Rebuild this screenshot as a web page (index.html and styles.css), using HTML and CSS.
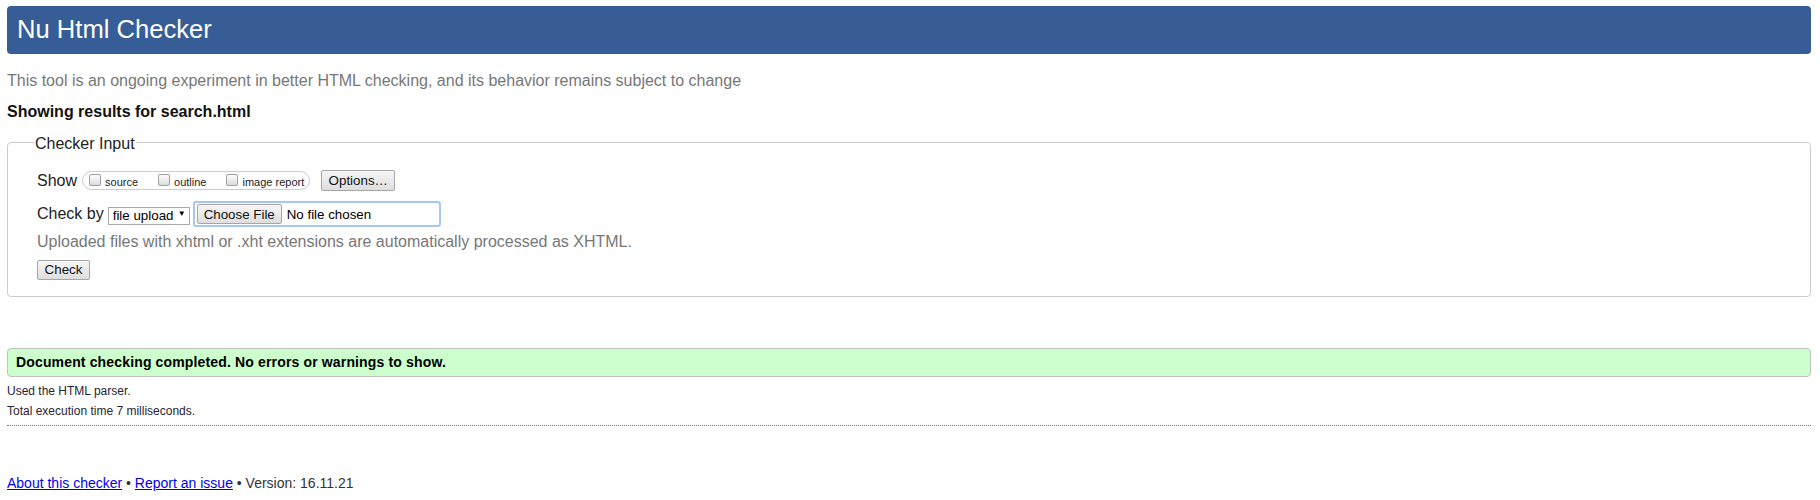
FILE: index.html
```html
<!DOCTYPE html>
<html lang="en">
<head>
<meta charset="utf-8">
<title>Showing results for search.html - Nu Html Checker</title>
<link rel="stylesheet" href="styles.css">
</head>
<body>
<h1 class="title">Nu Html Checker</h1>
<p class="tagline">This tool is an ongoing experiment in better HTML checking, and its behavior remains subject to change</p>
<p class="showing">Showing results for search.html</p>
<form class="checker-form">
  <fieldset class="checker">
    <legend class="checker-legend">Checker Input</legend>
    <div class="row show-row">
      <span class="row-label">Show</span>
      <span class="opts">
        <label class="opt"><input type="checkbox" class="cb">source</label>
        <label class="opt"><input type="checkbox" class="cb">outline</label>
        <label class="opt"><input type="checkbox" class="cb">image report</label>
      </span>
      <button type="button" class="btn options-btn">Options…</button>
    </div>
    <div class="row by-row">
      <span class="row-label">Check by</span>
      <span class="sel-wrap"><select class="sel"><option>file upload</option></select></span>
      <input type="file" class="file">
    </div>
    <p class="note">Uploaded files with xhtml or .xht extensions are automatically processed as XHTML.</p>
    <div class="submit-row"><button type="button" class="btn check-btn">Check</button></div>
  </fieldset>
</form>
<div class="success">Document checking completed. No errors or warnings to show.</div>
<p class="meta">Used the HTML parser.</p>
<p class="meta">Total execution time 7 milliseconds.</p>
<hr class="dots">
<p class="footer"><a href="#">About this checker</a> • <a href="#">Report an issue</a> • Version: 16.11.21</p>
</body>
</html>
```
FILE: styles.css
```css
html { background: #fff; }
body {
  margin: 0;
  padding: 6px 9px 0 7px;
  font-family: "Liberation Sans", Arial, sans-serif;
  color: #222;
  font-size: 16px;
  line-height: 20px;
}
.title {
  margin: 0;
  height: 48px;
  box-sizing: border-box;
  padding: 8px 10px 10px;
  background: #365d95;
  color: #fff;
  border-radius: 4px;
  font-size: 25.6px;
  font-weight: normal;
  line-height: 30px;
}
.tagline {
  margin: 17px 0 0;
  color: #777;
}
.showing {
  margin: 11px 0 0;
  font-weight: bold;
  color: #111;
}
.checker-form { margin: 0; }
.checker {
  margin: 8px 0 0;
  padding: 0 18px 17px 29px;
  border: 1px solid #ccc;
  border-radius: 4px;
  min-width: 0;
}
.checker-legend {
  padding: 4px 1px 0;
  margin-left: -3px;
  line-height: 20px;
  color: #222;
}
.row {
  display: flex;
  align-items: center;
}
.show-row {
  margin-top: 16px;
  height: 21px;
}
.row-label {
  color: #222;
}
.opts {
  display: inline-flex;
  align-items: center;
  height: 19px;
  box-sizing: border-box;
  margin-left: 5px;
  padding: 0 5px 0 6px;
  border: 1px solid #ccc;
  border-radius: 10px;
  gap: 20px;
}
.opt {
  display: inline-flex;
  align-items: center;
  font-size: 11px;
  line-height: 14px;
  color: #222;
  padding-top: 2px;
}
.cb {
  appearance: none;
  -webkit-appearance: none;
  width: 12px;
  height: 12px;
  margin: 0 4px 3px 0;
  box-sizing: border-box;
  border: 1px solid #a0a0a0;
  border-radius: 2px;
  background: linear-gradient(#fdfdfd, #dcdcdc);
}
.btn {
  font-family: "Liberation Sans", Arial, sans-serif;
  font-size: 13.33px;
  color: #111;
  height: 20px;
  line-height: 18px;
  padding: 0 8px;
  box-sizing: border-box;
  border: 1px solid #a6a6a6;
  border-radius: 2px;
  background: linear-gradient(#f6f6f6, #dedede);
}
.options-btn {
  margin-left: 11px;
  height: 21px;
  width: 74px;
  padding: 0;
}
.by-row {
  margin-top: 10px;
  height: 26px;
}
.sel-wrap {
  position: relative;
  display: inline-block;
  margin-left: 4px;
  height: 18px;
}
.sel-wrap::after {
  content: "▼";
  position: absolute;
  right: 4px;
  top: 4px;
  font-size: 8px;
  line-height: 10px;
  color: #000;
  pointer-events: none;
}
.sel {
  appearance: none;
  -webkit-appearance: none;
  width: 82px;
  height: 18px;
  box-sizing: border-box;
  margin: 0;
  padding: 0 14px 0 4px;
  border: 1px solid #a9a9a9;
  border-radius: 0;
  background: #fff;
  font-family: "Liberation Sans", Arial, sans-serif;
  font-size: 13.33px;
  line-height: 16px;
  color: #000;
}
.file {
  margin: 0 0 0 3px;
  width: 248px;
  height: 26px;
  box-sizing: border-box;
  padding: 1px 2px;
  border: 2px solid #a8c6f3;
  border-radius: 3px;
  font-family: "Liberation Sans", Arial, sans-serif;
  font-size: 13.33px;
  color: #000;
  background: #fff;
}
.file::file-selector-button {
  font-family: "Liberation Sans", Arial, sans-serif;
  font-size: 13.33px;
  height: 20px;
  width: 85px;
  margin: 0 5px 0 0;
  padding: 0;
  border: 1px solid #a6a6a6;
  border-radius: 2px;
  background: linear-gradient(#f6f6f6, #dedede);
  color: #111;
}
.note {
  margin: 5px 0 0;
  color: #777;
}
.submit-row {
  margin-top: 7px;
  height: 20px;
}
.check-btn {
  width: 53px;
  padding: 0;
}
.success {
  margin-top: 51px;
  height: 29px;
  box-sizing: border-box;
  padding: 5px 8px;
  border: 1px solid #c2c2c2;
  border-radius: 4px;
  background: #ccffcc;
  font-size: 14px;
  font-weight: bold;
  line-height: 17px;
  letter-spacing: 0.15px;
  color: #000;
}
.meta {
  margin: 0;
  font-size: 12px;
  line-height: 20px;
  color: #2a2230;
}
.success + .meta { margin-top: 4px; }
.dots {
  margin: 4px 0 0;
  height: 0;
  border: 0;
  border-top: 1px dotted #777;
}
.footer {
  margin: 47px 0 0;
  font-size: 14px;
  line-height: 20px;
  color: #333;
}
.footer a { color: #00e; }
```
